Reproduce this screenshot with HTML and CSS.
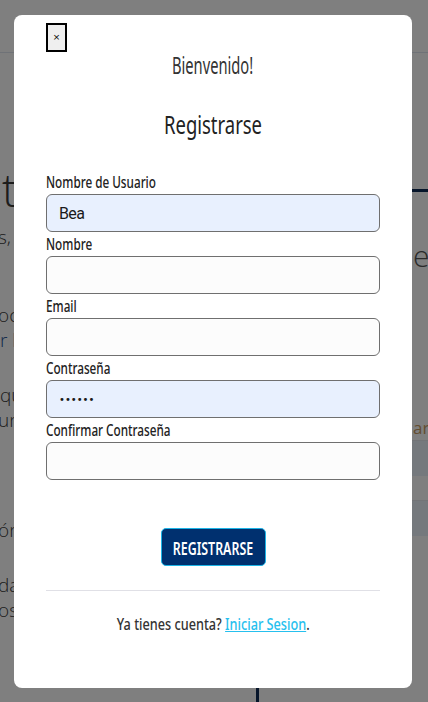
FILE: index.html
```html
<!DOCTYPE html>
<html lang="es">
<head>
<meta charset="utf-8">
<title>Registrarse</title>
<link rel="stylesheet" href="styles.css">
</head>
<body>
<div class="page">
  <header class="topbar"></header>
  <div class="content">
    <div class="left">
      <div class="big">t</div>
      <p class="frag f1">s,</p>
      <p class="frag f2">oc</p>
      <p class="frag f3 blue">r l</p>
      <p class="frag f4">qu</p>
      <p class="frag f5">un</p>
      <p class="frag f6">ón</p>
      <p class="frag f7">da</p>
      <p class="frag f8">os</p>
    </div>
    <div class="right">
      <div class="card">
        <div class="card-title">e<span class="orange">n</span></div>
        <div class="card-label">ar</div>
        <div class="box"></div>
        <div class="box"></div>
      </div>
    </div>
  </div>
</div>

<div class="overlay">
  <div class="modal">
    <button class="close" type="button">×</button>
    <h3 class="welcome"><span class="cond">Bienvenido!</span></h3>
    <h2 class="title"><span class="cond">Registrarse</span></h2>
    <form class="form">
      <label class="field">
        <span class="label"><span class="cond">Nombre de Usuario</span></span>
        <input class="input filled" type="text" value="Bea">
      </label>
      <label class="field">
        <span class="label"><span class="cond">Nombre</span></span>
        <input class="input" type="text">
      </label>
      <label class="field">
        <span class="label"><span class="cond">Email</span></span>
        <input class="input" type="email">
      </label>
      <label class="field">
        <span class="label"><span class="cond">Contraseña</span></span>
        <input class="input filled pw" type="password" value="secret">
      </label>
      <label class="field">
        <span class="label"><span class="cond">Confirmar Contraseña</span></span>
        <input class="input" type="password">
      </label>
      <div class="actions">
        <button class="submit" type="button"><span class="cond">Registrarse</span></button>
      </div>
    </form>
    <hr class="divider">
    <p class="footer"><span class="cond">Ya tienes cuenta? <a class="link" href="#">Iniciar Sesion</a>.</span></p>
  </div>
</div>
</body>
</html>
```

FILE: styles.css
```css
* { box-sizing: border-box; }

html, body {
  margin: 0;
  padding: 0;
  height: 100%;
}

body {
  background: #ffffff;
  font-family: "Open Sans", "DejaVu Sans", sans-serif;
  overflow: hidden;
}

/* ---------- background page ---------- */
.page {
  height: 702px;
  display: flex;
  flex-direction: column;
}

.topbar {
  height: 53px;
  border-bottom: 1px solid #dfe5ee;
  flex: none;
}

.content {
  flex: 1;
  display: grid;
  grid-template-columns: 256px 1fr;
}

.left {
  color: #3a3a3a;
  font-weight: 300;
  padding-left: 2px;
  overflow: hidden;
}

.big {
  font-size: 46px;
  line-height: 56px;
  margin-top: 108px;
  font-weight: 300;
}

.frag {
  margin: 0;
  font-size: 19px;
  line-height: 25px;
}

.f1 { margin-top: 8px; margin-left: -4px; }
.f2 { margin-top: 53px; margin-left: -4px; }
.f3 { margin-top: 0; margin-left: -2px; }
.f4 { margin-top: 30px; margin-left: -2px; }
.f5 { margin-top: 0; margin-left: -4px; }
.f6 { margin-top: 85px; margin-left: -4px; }
.f7 { margin-top: 30px; margin-left: -4px; }
.f8 { margin-top: 0; margin-left: -4px; }

.blue { color: #1d4f94; }

.right {
  border-left: 3px solid #0d2a55;
  overflow: hidden;
}

.card {
  margin-top: 136px;
  border-top: 3px solid #0d2a55;
  padding-left: 154px;
}

.card-title {
  font-size: 30px;
  font-weight: 300;
  color: #555;
  line-height: 40px;
  margin-top: 44px;
}

.orange { color: #d68b3a; }

.card-label {
  margin-top: 140px;
  font-size: 17px;
  line-height: 24px;
  color: #c79a62;
}

.box {
  height: 36px;
  margin-top: 0;
  margin-left: -20px;
  background: #ebf3fb;
  border-top: 1px solid #e4e8ee;
}

.box + .box { margin-top: 24px; }

/* ---------- overlay + modal ---------- */
.overlay {
  position: fixed;
  inset: 0;
  background: rgba(0, 0, 0, 0.5);
  padding-top: 15px;
}

.modal {
  width: 398px;
  height: 673px;
  margin-left: 14px;
  background: #ffffff;
  border-radius: 8px;
  padding: 8px 32px 0;
  font-family: "Noto Sans", "Open Sans", sans-serif;
  color: #222;
}

/* condensed rendering of the display face */
.cond {
  display: inline-block;
  white-space: nowrap;
  transform-origin: center center;
}

.close {
  display: block;
  width: 21px;
  height: 29px;
  padding: 0;
  border: 2px solid #000;
  background: #efefef;
  font-size: 9px;
  line-height: 1;
  color: #000;
  font-family: "DejaVu Sans", sans-serif;
}

.welcome {
  margin: 0;
  text-align: center;
  font-size: 23px;
  line-height: 27px;
  font-weight: 400;
  color: #333;
}

.welcome .cond { transform: scaleX(0.64); }

.title {
  margin: 27px 0 0;
  text-align: center;
  font-size: 26px;
  line-height: 36px;
  font-weight: 400;
  color: #222;
}

.title .cond { transform: scaleX(0.71); }

.form {
  margin-top: 28px;
  display: flex;
  flex-direction: column;
}

.field {
  display: flex;
  flex-direction: column;
}

.label {
  display: block;
  font-size: 17px;
  line-height: 24px;
  font-weight: 500;
  color: #222;
}

.label .cond {
  transform: scaleX(0.69);
  transform-origin: left center;
}

.input {
  height: 38px;
  width: 100%;
  border: 1px solid #6f6f6f;
  border-radius: 6px;
  background: #fcfcfc;
  padding: 0 12px;
  font-family: "Roboto", sans-serif;
  font-size: 16px;
  font-weight: 400;
  letter-spacing: -0.6px;
  color: #1a1a1a;
  outline: none;
}

.input.pw {
  font-family: "DejaVu Sans", sans-serif;
  font-size: 10px;
  letter-spacing: 0;
}

.input.filled {
  background: #e8f0fe;
}

.actions {
  display: flex;
  justify-content: center;
  margin-top: 48px;
}

.submit {
  display: flex;
  align-items: center;
  justify-content: center;
  width: 105px;
  height: 38px;
  padding: 0;
  border: 1px solid #1cb4e6;
  border-radius: 5px;
  background: #00306f;
  color: #ffffff;
  font-family: inherit;
  font-size: 18.5px;
  font-weight: 600;
  text-transform: uppercase;
}

.submit .cond { transform: scaleX(0.67); }

.divider {
  margin: 24px 0 0;
  border: 0;
  border-top: 1px solid #e0e0e6;
}

.footer {
  margin: 21px 0 0;
  text-align: center;
  font-size: 16.5px;
  line-height: 24px;
  font-weight: 500;
  color: #333;
}

.footer .cond { transform: scaleX(0.77); }

.link {
  color: #26c0ee;
  text-decoration: underline;
}
```
